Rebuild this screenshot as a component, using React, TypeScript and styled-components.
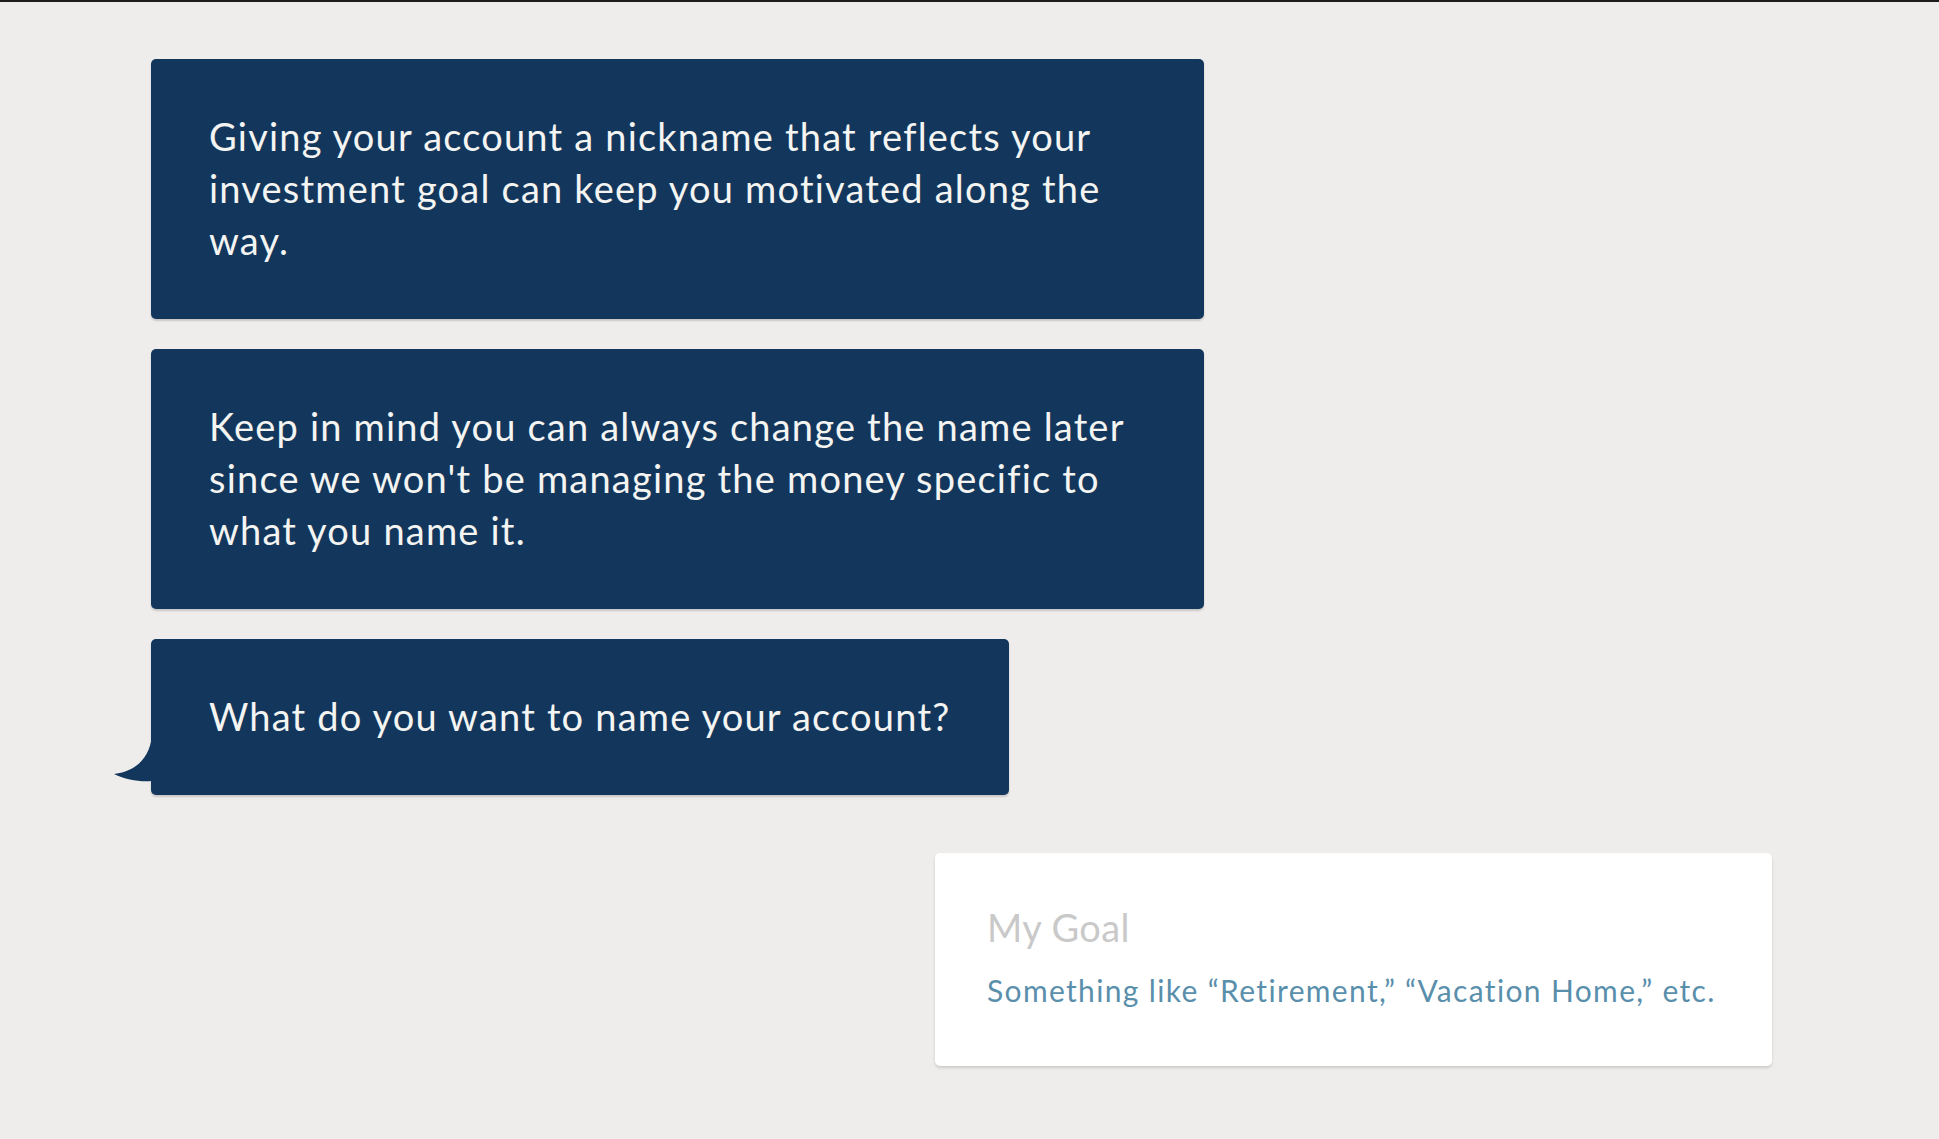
import { createGlobalStyle, styled } from 'styled-components'

const GlobalStyle = createGlobalStyle`
	html, body {
		margin: 0;
		padding: 0;
		background: #eeedeb;
	}
	body {
		font-family: Lato, 'Noto Sans', sans-serif;
		-webkit-font-smoothing: antialiased;
	}
	* {
		box-sizing: border-box;
	}
`

const messages = [
	'Giving your account a nickname that reflects your investment goal can keep you motivated along the way.',
	"Keep in mind you can always change the name later since we won't be managing the money specific to what you name it.",
	'What do you want to name your account?',
]

export default function App() {
	return (
		<>
			<GlobalStyle />
			<Page>
				<Thread>
					{messages.map((text, i) => (
						<Bubble key={i}>
							{text}
							{i === messages.length - 1 && (
								<Tail viewBox="0 0 38 51" width={38} height={51} aria-hidden>
									<path d="M38 0 C38 22 26 40 0 43 C12 49 26 51 38 50 Z" fill="#13375c" />
								</Tail>
							)}
						</Bubble>
					))}
					<AnswerCard>
						<NameInput type="text" placeholder="My Goal" />
						<Hint>Something like “Retirement,” “Vacation Home,” etc.</Hint>
					</AnswerCard>
				</Thread>
			</Page>
		</>
	)
}

const Page = styled.div`
	min-height: 100vh;
	border-top: 2px solid #1c1c1c;
`

const Thread = styled.main`
	display: flex;
	flex-direction: column;
	align-items: flex-start;
	gap: 30px;
	padding: 57px 167px 60px 151px;
`

const Bubble = styled.div`
	position: relative;
	max-width: 1053px;
	padding: 51px 59px 53px 58px;
	background: #13375c;
	color: #f4f4f2;
	font-size: 38px;
	letter-spacing: 1.2px;
	line-height: 52px;
	border-radius: 5px;
	box-shadow: 0 2px 2px rgba(0, 0, 0, 0.16);
`

const Tail = styled.svg`
	position: absolute;
	left: -37px;
	bottom: 13px;
	display: block;
`

const AnswerCard = styled.section`
	align-self: flex-end;
	width: 837px;
	margin-top: 28px;
	padding: 48px 52px 56px;
	background: #fff;
	border-radius: 5px;
	box-shadow: 0 2px 3px rgba(0, 0, 0, 0.14);
`

const NameInput = styled.input`
	display: block;
	width: 100%;
	height: 52px;
	padding: 0;
	border: none;
	outline: none;
	background: transparent;
	font-family: inherit;
	font-size: 38px;
	letter-spacing: 0.4px;
	line-height: 52px;
	color: #333;

	&::placeholder {
		color: #c9c9c9;
	}
`

const Hint = styled.p`
	margin: 17px 0 0;
	font-size: 30px;
	letter-spacing: 1.35px;
	line-height: 40px;
	white-space: nowrap;
	color: #5a8fac;
`
